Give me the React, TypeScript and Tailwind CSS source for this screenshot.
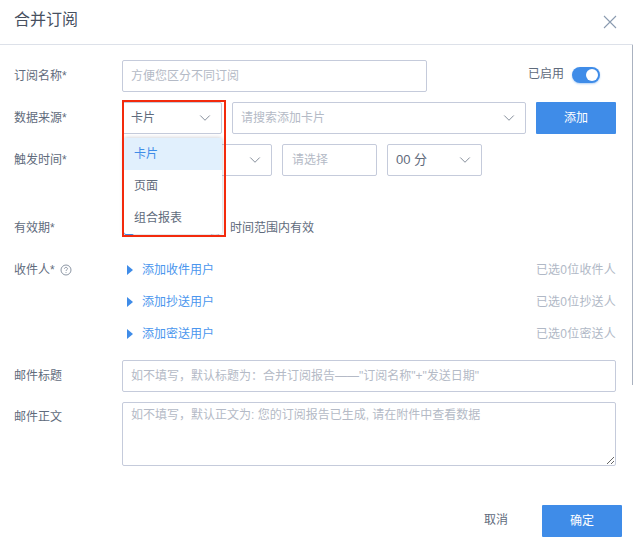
import { ChevronDown } from "lucide-react";

const border = "border border-[#c5cbdb] rounded-[2px]";
const font = '"Liberation Sans", "Noto Sans CJK SC", sans-serif';

function Field({ label, top, children }: { label: React.ReactNode; top?: boolean; children: React.ReactNode }) {
  return (
    <div className={`flex ${top ? "items-start" : "items-center"}`}>
      <div className={`w-[108px] shrink-0 text-xs text-[#5f6b7c] ${top ? "pt-[7px]" : "pb-[1px]"}`}>{label}</div>
      {children}
    </div>
  );
}

function SelectBox({ text, className, placeholder, textClass }: { text?: string; className: string; placeholder?: boolean; textClass?: string }) {
  return (
    <div className={`flex h-8 items-center justify-between bg-white pl-[8px] pr-[7px] ${border} ${className} ${placeholder ? "text-[#b4bac6]" : "text-[#5f6b7c]"}`}>
      <span className={`pb-[1px] ${textClass ?? "text-xs"}`}>{text}</span>
      <ChevronDown size={18} strokeWidth={1.1} className="text-[#6b7686]" />
    </div>
  );
}

function Recipient({ label, text, count }: { label?: React.ReactNode; text: string; count: string }) {
  return (
    <div className="flex h-4 items-center text-xs">
      <div className="w-[108px] shrink-0 text-[#5f6b7c]">{label}</div>
      <span className="ml-[5px] h-0 w-0 border-y-[5px] border-l-[6px] border-y-transparent border-l-[#3f8ce8]" />
      <span className="ml-[9px] text-[#4a96ee]">{text}</span>
      <span className="ml-auto tracking-[0.2px] text-[#b0b8c6]">{count}</span>
    </div>
  );
}

export default function App() {
  return (
    <div className="relative h-[544px] w-[633px] overflow-hidden bg-white" style={{ fontFamily: font }}>
      {/* Header */}
      <div className="flex h-[45px] items-center justify-between border-b border-[#dde1e9] pl-[14px] pr-[16px]">
        <h1 className="pb-[5px] text-base text-[#47505f]">合并订阅</h1>
        <svg width="14" height="14" viewBox="0 0 14 14" className="-mt-[1px]" fill="none" stroke="#8a9bb0" strokeWidth="1.1">
          <path d="M1 1l12 12M13 1L1 13" />
        </svg>
      </div>

      <div className="absolute right-0 top-[45px] h-[340px] w-[1px] bg-[#aab2c0]" />

      {/* Form */}
      <div className="flex flex-col pl-[14px] pr-[17px] pt-[15px]">
        <Field label="订阅名称*">
          <div className={`flex h-8 w-[305px] items-center px-[8px] pb-[1px] text-xs text-[#b4bac6] ${border}`}>方便您区分不同订阅</div>
          <div className="ml-auto mr-[16px] flex items-center gap-2 pb-[2px] text-xs text-[#5f6b7c]">
            <span className="-mt-[2px]">已启用</span>
            <div className="flex h-4 w-7 items-center justify-end rounded-full bg-[#3f8ce8] pr-[2px] shadow-[0_1px_2px_rgba(63,140,232,0.4)]">
              <span className="h-3 w-3 rounded-full bg-white" />
            </div>
          </div>
        </Field>

        <div className="mt-[10px]">
          <Field label="数据来源*">
            <SelectBox text="卡片" className="w-[100px] border-[#3f8ce8]" />
            <SelectBox text="请搜索添加卡片" placeholder className="ml-[10px] w-[294px]" />
            <button className="ml-[10px] h-8 w-20 rounded-[1px] bg-[#3f8ce8] pb-[1px] text-xs text-white">添加</button>
          </Field>
        </div>

        <div className="mt-[10px]">
          <Field label="触发时间*">
            <SelectBox className="w-[150px]" />
            <div className={`ml-[10px] flex h-8 w-[95px] items-center px-[9px] pb-[1px] text-xs text-[#b4bac6] ${border}`}>请选择</div>
            <SelectBox text="00 分" textClass="text-[13px]" className="ml-[10px] w-[95px]" />
          </Field>
        </div>

        {/* Validity row, mostly covered by the open dropdown */}
        <div className="mt-[44px] flex h-4 items-center text-xs text-[#5f6b7c]">
          <div className="w-[108px] shrink-0">有效期*</div>
          <span className="mt-[1px] h-3.5 w-3.5 rounded-full border-[4px] border-[#3f8ce8]" />
          <span className="w-[72px]" />
          <span className="mt-[1px] h-3.5 w-3.5 rounded-full border border-[#c5cbdb]" />
          <span className="ml-[8px]">时间范围内有效</span>
        </div>

        <div className="mt-[26px] flex flex-col gap-4">
          <Recipient
            text="添加收件用户"
            count="已选0位收件人"
            label={
              <span className="flex items-center gap-[5px]">
                收件人*
                <svg width="12" height="12" viewBox="0 0 12 12" fill="none" stroke="#7f8a9a" strokeWidth="0.9">
                  <circle cx="6" cy="6" r="5" />
                  <path d="M4.5 4.8C4.5 3.9 5.2 3.4 6 3.4s1.5.5 1.5 1.3c0 1.1-1.5 1.1-1.5 2.3M6 8v.8" />
                </svg>
              </span>
            }
          />
          <Recipient text="添加抄送用户" count="已选0位抄送人" />
          <Recipient text="添加密送用户" count="已选0位密送人" />
        </div>

        <div className="mt-[18px]">
          <div className="flex items-center">
            <div className="w-[108px] shrink-0 text-xs text-[#5f6b7c]">邮件标题</div>
            <div className={`flex h-8 flex-1 items-center px-[8px] text-xs text-[#b4bac6] ${border}`}>
              如不填写，默认标题为：合并订阅报告——"订阅名称"+"发送日期"
            </div>
          </div>
        </div>

        <div className="mt-[10px]">
          <Field label="邮件正文" top>
            <textarea
              readOnly
              placeholder="如不填写，默认正文为: 您的订阅报告已生成, 请在附件中查看数据"
              className={`h-16 flex-1 px-[8px] py-[3px] text-xs leading-[18px] outline-none placeholder:text-[#b4bac6] ${border}`}
            />
          </Field>
        </div>
      </div>

      {/* Footer */}
      <div className="mt-[39px] flex items-center justify-end pr-[11px]">
        <button className="mr-[34px] pb-[2px] text-xs text-[#5f6b7c]">取消</button>
        <button className="h-8 w-20 rounded-[1px] bg-[#3f8ce8] pb-[1px] text-xs text-white">确定</button>
      </div>

      {/* Open dropdown */}
      <div className="absolute left-[124px] top-[138px] z-10 w-[98px] rounded-[2px] bg-white text-xs text-[#5f6b7c] shadow-[0_0_4px_rgba(80,90,110,0.35)]">
        <div className="flex h-8 items-center bg-[#e1f0fd] pb-[1px] pl-[10px] text-[#3f8ce8]">卡片</div>
        <div className="flex h-8 items-center pb-[1px] pl-[10px]">页面</div>
        <div className="flex h-8 items-center pb-[1px] pl-[10px]">组合报表</div>
      </div>

      {/* Highlight box */}
      <div className="pointer-events-none absolute left-[122px] top-[100px] z-20 h-[137px] w-[104px] border-2 border-[#f32a0c]" />
    </div>
  );
}
